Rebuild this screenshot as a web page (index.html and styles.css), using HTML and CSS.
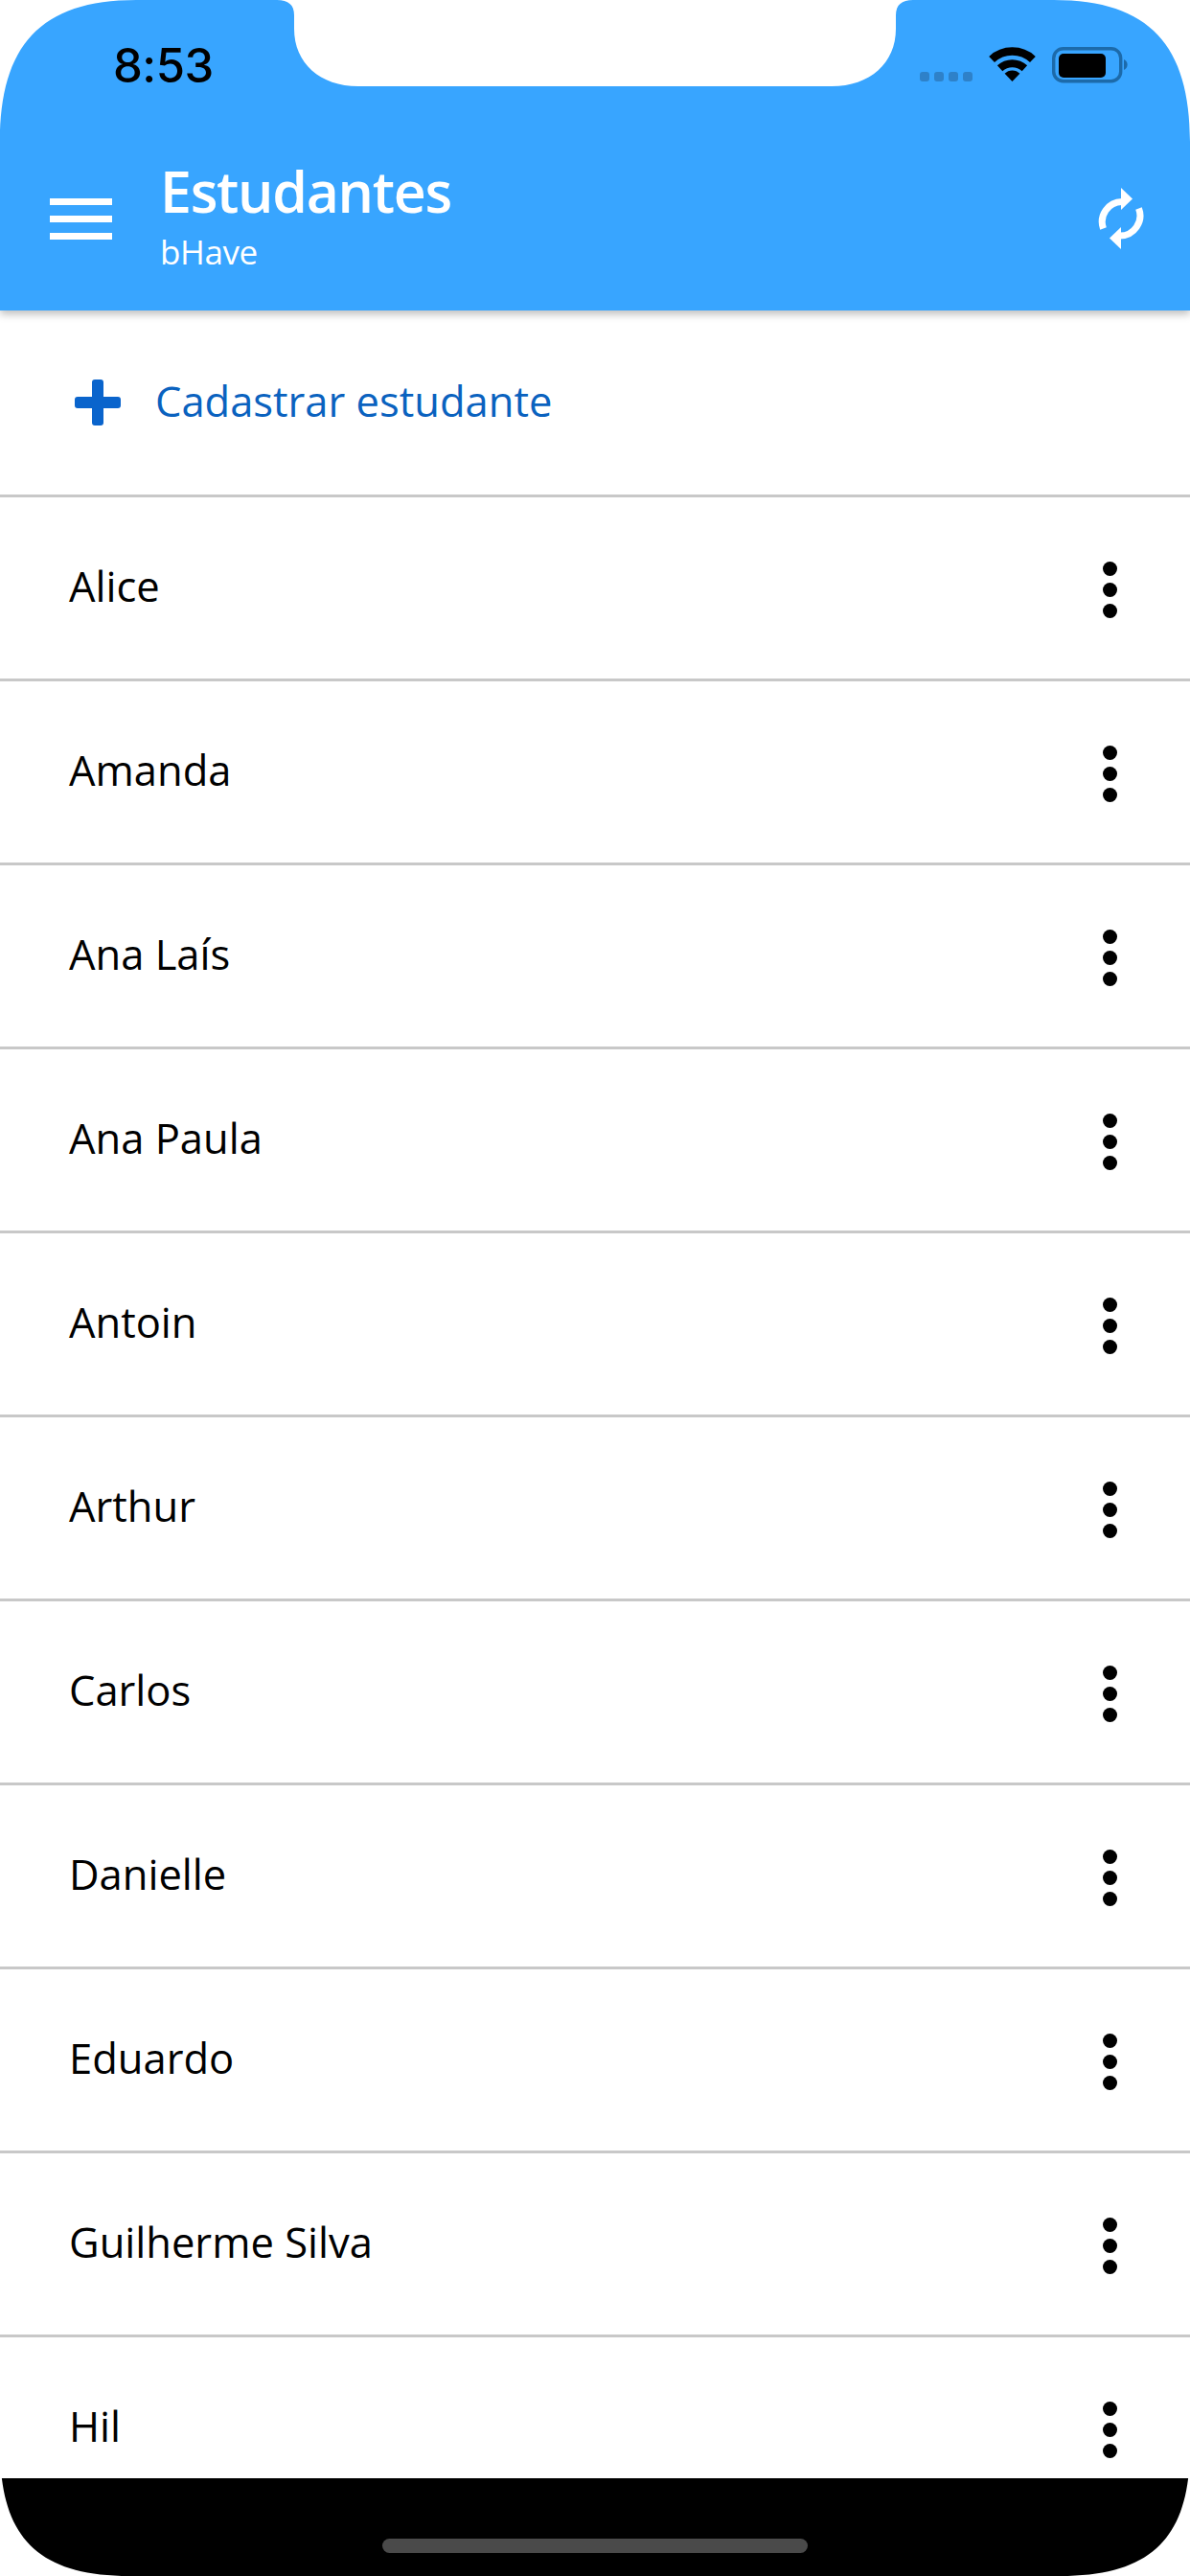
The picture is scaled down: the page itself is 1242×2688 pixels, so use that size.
FILE: index.html
```html
<!DOCTYPE html>
<html lang="pt">
<head>
<meta charset="utf-8">
<title>Estudantes</title>
<link rel="stylesheet" href="styles.css">
</head>
<body>
<div class="screen">
  <header class="header">
    <svg class="header-cut" width="1242" height="150" viewBox="0 0 1242 150" aria-hidden="true">
      <path class="cut" d="M0 0H142C42 0 0 48 0 148Z"/>
      <path class="cut" d="M1242 0H1100C1200 0 1242 48 1242 148Z"/>
      <path class="cut" d="M289 0C301 0 307 5 307 16V30C307 66 334 90 374 90H868C908 90 935 66 935 30V16C935 5 941 0 953 0Z"/>
    </svg>
    <div class="status">
      <span class="time">8:53</span>
      <div class="status-icons">
        <div class="signal"><i></i><i></i><i></i><i></i></div>
        <svg class="wifi" width="49" height="36" viewBox="0 0 49 36" aria-hidden="true">
          <path d="M3.1 13A31.5 31.5 0 0 1 45.9 13" fill="none" stroke="#000" stroke-width="8.5"/>
          <path d="M11.6 22.2A19 19 0 0 1 37.4 22.2" fill="none" stroke="#000" stroke-width="8"/>
          <path d="M24.5 36L16.6 27.8A11 11 0 0 1 32.4 27.8Z" fill="#000"/>
        </svg>
        <svg class="battery" width="80" height="38" viewBox="0 0 80 38" aria-hidden="true">
          <rect x="1.7" y="1.7" width="70" height="34" rx="10" fill="none" stroke="#1c6aaa" stroke-width="3.4"/>
          <rect x="7" y="7" width="49" height="25" rx="5" fill="#000"/>
          <path d="M75 13A6 6 0 0 1 75 24Z" fill="#1c6aaa"/>
        </svg>
      </div>
    </div>
    <div class="nav">
      <div class="menu"><i></i><i></i><i></i></div>
      <div class="titles">
        <h1 class="title">Estudantes</h1>
        <p class="subtitle">bHave</p>
      </div>
      <svg class="refresh" width="50" height="64" viewBox="0 0 50 64" aria-hidden="true">
        <path d="M6.5 42.5A21 21 0 0 1 26 14.5" fill="none" stroke="#fff" stroke-width="7"/>
        <path d="M25 0L37 11.5L25 23Z" fill="#fff"/>
        <path d="M43.5 21.5A21 21 0 0 1 24 50" fill="none" stroke="#fff" stroke-width="7"/>
        <path d="M25 41L13 52.5L25 64Z" fill="#fff"/>
      </svg>
    </div>
  </header>

  <main class="list">
    <div class="row add-row">
      <svg class="plus" width="48" height="48" viewBox="0 0 48 48" aria-hidden="true">
        <path d="M21 0H27A3 3 0 0 1 30 3V18H45A3 3 0 0 1 48 21V27A3 3 0 0 1 45 30H30V45A3 3 0 0 1 27 48H21A3 3 0 0 1 18 45V30H3A3 3 0 0 1 0 27V21A3 3 0 0 1 3 18H18V3A3 3 0 0 1 21 0Z" fill="#0a64cc"/>
      </svg>
      <span class="add-label">Cadastrar estudante</span>
    </div>
    <div class="row"><span class="name">Alice</span><div class="kebab"><i></i><i></i><i></i></div></div>
    <div class="row"><span class="name">Amanda</span><div class="kebab"><i></i><i></i><i></i></div></div>
    <div class="row"><span class="name">Ana Laís</span><div class="kebab"><i></i><i></i><i></i></div></div>
    <div class="row"><span class="name">Ana Paula</span><div class="kebab"><i></i><i></i><i></i></div></div>
    <div class="row"><span class="name">Antoin</span><div class="kebab"><i></i><i></i><i></i></div></div>
    <div class="row"><span class="name">Arthur</span><div class="kebab"><i></i><i></i><i></i></div></div>
    <div class="row"><span class="name">Carlos</span><div class="kebab"><i></i><i></i><i></i></div></div>
    <div class="row"><span class="name">Danielle</span><div class="kebab"><i></i><i></i><i></i></div></div>
    <div class="row"><span class="name">Eduardo</span><div class="kebab"><i></i><i></i><i></i></div></div>
    <div class="row"><span class="name">Guilherme Silva</span><div class="kebab"><i></i><i></i><i></i></div></div>
    <div class="row"><span class="name">Hil</span><div class="kebab"><i></i><i></i><i></i></div></div>
  </main>

  <footer class="footer">
    <svg class="footer-cut" width="1242" height="150" viewBox="0 0 1242 150" aria-hidden="true">
      <path class="cut" d="M0 150H135C36 150 0 106 0 15Z"/>
      <path class="cut" d="M1242 150H1107C1206 150 1242 106 1242 15Z"/>
    </svg>
    <div class="home-bar"></div>
  </footer>
</div>
</body>
</html>
```

FILE: styles.css
```css
* { box-sizing: border-box; }
html, body { margin: 0; padding: 0; background: #fff; }
.screen {
  width: 1242px;
  height: 2688px;
  display: flex;
  flex-direction: column;
  overflow: hidden;
  font-family: "Open Sans", Lato, sans-serif;
}
.cut { fill: #fff; }

.header {
  position: relative;
  z-index: 2;
  flex: 0 0 324px;
  display: flex;
  flex-direction: column;
  background: #38a5ff;
  box-shadow: 0 4px 8px rgba(0, 0, 0, 0.25);
}
.header-cut { position: absolute; left: 0; top: 0; }

.status {
  position: relative;
  flex: 0 0 132px;
  display: flex;
  justify-content: space-between;
  align-items: flex-start;
  padding: 40px 64px 0 118px;
}
.time {
  font-family: Inter, sans-serif;
  font-weight: 500;
  font-size: 49px;
  line-height: 58px;
  color: #000;
  letter-spacing: -0.5px;
}
.status-icons {
  display: flex;
  align-items: flex-start;
  padding-top: 9px;
}
.signal {
  display: flex;
  gap: 5px;
  margin-top: 26px;
  margin-right: 17px;
}
.signal i {
  display: block;
  width: 10px;
  height: 10px;
  border-radius: 3px;
  background: #2e81c9;
}
.wifi { display: block; margin-right: 17px; }
.battery { display: block; }

.nav {
  position: relative;
  flex: 1;
  display: flex;
  align-items: center;
  padding: 0 47px 0 52px;
}
.menu {
  flex: 0 0 65px;
  display: flex;
  flex-direction: column;
  gap: 11px;
  margin-right: 50px;
}
.menu i {
  display: block;
  height: 7px;
  background: #fff;
}
.titles {
  flex: 1;
  padding-top: 2px;
}
.title {
  margin: 0;
  font-size: 59px;
  font-weight: 600;
  line-height: 68px;
  color: #fff;
  letter-spacing: -1.3px;
}
.subtitle {
  margin: 0;
  font-size: 35px;
  font-weight: 400;
  line-height: 60px;
  color: #fff;
  letter-spacing: -0.4px;
}
.refresh { display: block; }

.list {
  flex: 1;
  min-height: 0;
  overflow: hidden;
}
.row {
  height: 192px;
  display: flex;
  align-items: center;
  justify-content: space-between;
  padding: 0 72px;
  border-bottom: 3px solid #c8c8c8;
}
.add-row {
  height: 195px;
  justify-content: flex-start;
  padding-left: 78px;
  gap: 36px;
}
.add-label {
  font-size: 43.5px;
  color: #0a62bf;
  padding-bottom: 3px;
}
.name {
  font-size: 43.5px;
  color: #000;
  padding-bottom: 5px;
}
.kebab {
  display: flex;
  flex-direction: column;
  align-items: center;
  gap: 7px;
  width: 24px;
  padding-top: 3px;
}
.kebab i {
  display: block;
  width: 15px;
  height: 15px;
  border-radius: 50%;
  background: #000;
}

.footer {
  position: relative;
  flex: 0 0 102px;
  background: #000;
  overflow: hidden;
  display: flex;
  justify-content: center;
  align-items: flex-start;
  padding-top: 63px;
}
.footer-cut { position: absolute; left: 0; bottom: 0; }
.home-bar {
  position: relative;
  width: 444px;
  height: 15px;
  border-radius: 8px;
  background: #4a4a4a;
}
```
